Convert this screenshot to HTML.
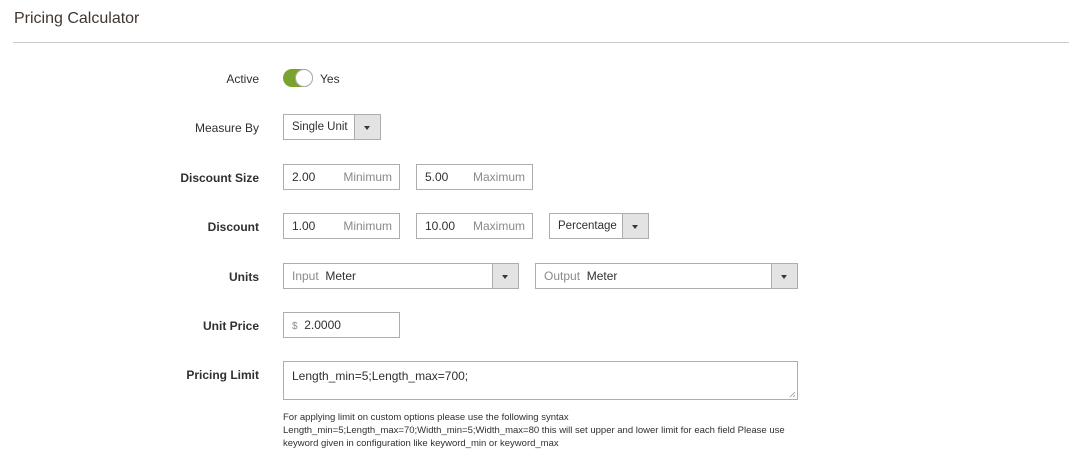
<!DOCTYPE html>
<html><head><style>
body{margin:0;width:1080px;height:456px;background:#fff;font-family:"Liberation Sans",sans-serif;color:#303030;position:relative;overflow:hidden}
.a{position:absolute}
.t{left:14px;top:10px;font-size:16px;color:#41362f}
.hr{left:13px;top:42px;width:1056px;height:1px;background:#ccc}
.l{right:821px;font-size:12px;font-weight:bold;color:#303030;text-align:right;white-space:nowrap}
.lb{font-weight:normal}
.box{border:1px solid #adadad;box-sizing:border-box;background:#fff;font-size:12px}
.box .v{position:absolute;left:8px;top:50%;transform:translateY(-50%)}
.box .p{position:absolute;right:7px;top:50%;transform:translateY(-50%);color:#8a8a8a}
.btn{position:absolute;right:0;top:0;bottom:0;width:25px;background:#e3e3e3;border-left:1px solid #adadad}
.btn:after{content:"";position:absolute;left:9px;top:11px;border-left:3.5px solid transparent;border-right:3.5px solid transparent;border-top:4px solid #41362f}
.note{left:283px;top:411px;font-size:9.5px;line-height:13px;color:#303030;width:530px}
</style></head><body>
<div class="a t">Pricing Calculator</div>
<div class="a hr"></div>

<div class="a l lb" style="top:72px">Active</div>
<div class="a" style="left:283px;top:69px;width:30px;height:18px;border-radius:9px;background:#79a22e"></div>
<div class="a" style="left:295px;top:69px;width:16px;height:16px;border-radius:50%;background:#fff;border:1px solid #adadad"></div>
<div class="a" style="left:320px;top:72px;font-size:12px">Yes</div>

<div class="a l lb" style="top:121px">Measure By</div>
<div class="a box" style="left:283px;top:114px;width:98px;height:26px;font-size:11.5px"><span class="v">Single Unit</span><div class="btn"></div></div>

<div class="a l" style="top:171px">Discount Size</div>
<div class="a box" style="left:283px;top:164px;width:117px;height:26px"><span class="v">2.00</span><span class="p">Minimum</span></div>
<div class="a box" style="left:416px;top:164px;width:117px;height:26px"><span class="v">5.00</span><span class="p">Maximum</span></div>

<div class="a l" style="top:220px">Discount</div>
<div class="a box" style="left:283px;top:213px;width:117px;height:26px"><span class="v">1.00</span><span class="p">Minimum</span></div>
<div class="a box" style="left:416px;top:213px;width:117px;height:26px"><span class="v">10.00</span><span class="p">Maximum</span></div>
<div class="a box" style="left:549px;top:213px;width:100px;height:26px;font-size:11.5px"><span class="v">Percentage</span><div class="btn"></div></div>

<div class="a l" style="top:270px">Units</div>
<div class="a box" style="left:283px;top:263px;width:236px;height:26px"><span class="v"><span style="color:#8a8a8a">Input</span>&nbsp; Meter</span><div class="btn"></div></div>
<div class="a box" style="left:535px;top:263px;width:263px;height:26px"><span class="v"><span style="color:#8a8a8a">Output</span>&nbsp; Meter</span><div class="btn"></div></div>

<div class="a l" style="top:319px">Unit Price</div>
<div class="a box" style="left:283px;top:312px;width:117px;height:26px"><span class="v"><span style="color:#8a8a8a;font-size:10px">$</span>&nbsp; 2.0000</span></div>

<div class="a l" style="top:368px">Pricing Limit</div>
<div class="a box" style="left:283px;top:361px;width:515px;height:39px"><span style="position:absolute;left:8px;top:7px">Length_min=5;Length_max=700;</span>
<svg style="position:absolute;right:1px;bottom:1px" width="7" height="7"><path d="M1 6L6 1M4 6L6 4" stroke="#999" stroke-width="0.8"/></svg></div>

<div class="a note">For applying limit on custom options please use the following syntax<br>Length_min=5;Length_max=70;Width_min=5;Width_max=80 this will set upper and lower limit for each field Please use keyword given in configuration like keyword_min or keyword_max</div>
</body></html>
